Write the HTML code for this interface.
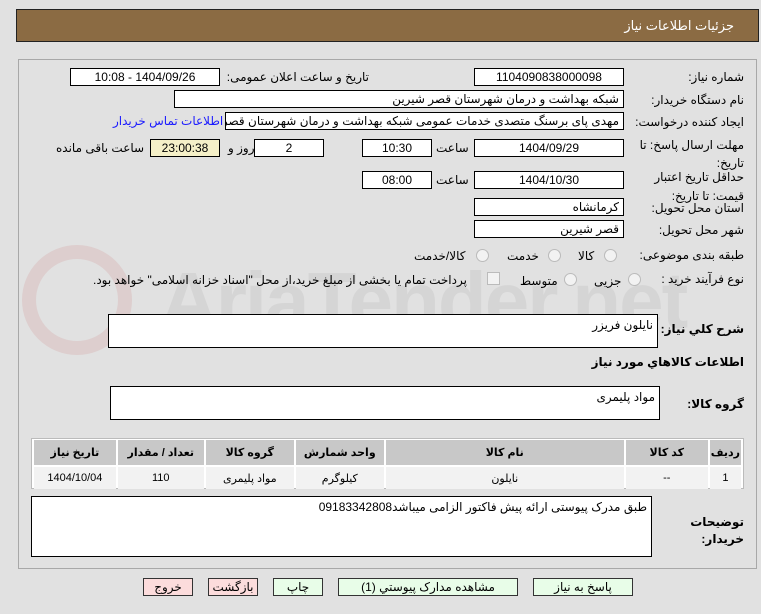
<!DOCTYPE html>
<html><head><meta charset="utf-8"><style>
body{margin:0;width:761px;height:614px;background:#e1e1e1;font-family:"Liberation Sans","DejaVu Sans",sans-serif;font-size:12px;color:#000;position:relative;overflow:hidden;direction:rtl}
.a{position:absolute}
.hdr{left:16px;top:9px;width:743px;height:33px;background:#8b6b43;border:1px solid #222;box-sizing:border-box}
.hdr span{position:absolute;right:24px;top:8px;color:#fff;font-size:13px}
.panel{left:18px;top:59px;width:739px;height:510px;border:1px solid #a8a8a8;box-sizing:border-box}
.box{position:absolute;background:#fff;border:1px solid #000;box-sizing:border-box;height:18px;font-size:12px;line-height:16px;padding:0 4px;white-space:nowrap;overflow:hidden}
.c{text-align:center}
.l{position:absolute;white-space:nowrap;font-size:12px}
.rad{position:absolute;width:11px;height:11px;border-radius:50%;border:1px solid #bbb;background:#f2f2f2}
.btn{position:absolute;top:578px;height:18px;border:1px solid #333;box-sizing:border-box;font-size:12px;text-align:center;line-height:16px;background:#e8fde8}
table{border-collapse:separate;border-spacing:2px;font-size:11px}
th{background:#c8c8c8;height:23px;font-weight:bold}
td{background:#f2f2f2;height:20px;text-align:center}
</style></head><body>
<div class="a hdr"><span>جزئیات اطلاعات نیاز</span></div>
<div class="a panel"></div>
<div class="a" style="left:22px;top:245px;width:110px;height:110px;border-radius:50%;border:14px solid rgba(205,120,120,.18);box-sizing:border-box"></div>
<div class="a" style="left:160px;top:255px;font-size:80px;font-weight:bold;color:rgba(150,150,150,.15);direction:ltr;letter-spacing:-2px">AriaTender.net</div>

<div class="l" style="right:17px;top:70px">شماره نیاز:</div>
<div class="box c" style="left:474px;top:68px;width:150px">1104090838000098</div>
<div class="l" style="right:392px;top:70px">تاریخ و ساعت اعلان عمومی:</div>
<div class="box c" style="left:70px;top:68px;width:150px">1404/09/26 - 10:08</div>

<div class="l" style="right:17px;top:93px">نام دستگاه خریدار:</div>
<div class="box" style="left:174px;top:90px;width:450px">شبکه بهداشت و درمان شهرستان قصر شیرین</div>

<div class="l" style="right:17px;top:115px">ایجاد کننده درخواست:</div>
<div class="box" style="left:225px;top:112px;width:399px">مهدی پای برسنگ متصدی خدمات عمومی شبکه بهداشت و درمان شهرستان قصر</div>
<div class="l" style="left:113px;top:114px;color:#1a1aff">اطلاعات تماس خریدار</div>

<div class="l" style="right:17px;top:136px;line-height:18px">مهلت ارسال پاسخ: تا<br>تاریخ:</div>
<div class="box c" style="left:474px;top:139px;width:150px">1404/09/29</div>
<div class="l" style="left:436px;top:141px">ساعت</div>
<div class="box c" style="left:362px;top:139px;width:70px">10:30</div>
<div class="l" style="left:228px;top:141px">روز و</div>
<div class="box c" style="left:254px;top:139px;width:70px">2</div>
<div class="box c" style="left:150px;top:139px;width:70px;background:#f5f0c8">23:00:38</div>
<div class="l" style="left:56px;top:141px">ساعت باقی مانده</div>

<div class="l" style="right:17px;top:168px;line-height:19px">حداقل تاریخ اعتبار<br>قیمت: تا تاریخ:</div>
<div class="box c" style="left:474px;top:171px;width:150px">1404/10/30</div>
<div class="l" style="left:436px;top:173px">ساعت</div>
<div class="box c" style="left:362px;top:171px;width:70px">08:00</div>

<div class="l" style="right:17px;top:201px">استان محل تحویل:</div>
<div class="box" style="left:474px;top:198px;width:150px">کرمانشاه</div>
<div class="l" style="right:17px;top:223px">شهر محل تحویل:</div>
<div class="box" style="left:474px;top:220px;width:150px">قصر شیرین</div>

<div class="l" style="right:17px;top:248px">طبقه بندی موضوعی:</div>
<div class="rad" style="left:604px;top:249px"></div><div class="l" style="left:578px;top:249px">کالا</div>
<div class="rad" style="left:548px;top:249px"></div><div class="l" style="left:507px;top:249px">خدمت</div>
<div class="rad" style="left:476px;top:249px"></div><div class="l" style="left:414px;top:249px">کالا/خدمت</div>

<div class="l" style="right:17px;top:272px">نوع فرآیند خرید :</div>
<div class="rad" style="left:628px;top:273px"></div><div class="l" style="left:594px;top:274px">جزیی</div>
<div class="rad" style="left:564px;top:273px"></div><div class="l" style="left:520px;top:274px">متوسط</div>
<div class="a" style="left:487px;top:272px;width:11px;height:11px;border:1px solid #bbb;background:#f2f2f2"></div>
<div class="l" style="left:93px;top:273px">پرداخت تمام یا بخشی از مبلغ خرید،از محل "اسناد خزانه اسلامی" خواهد بود.</div>

<div class="l" style="right:17px;top:322px;font-weight:bold">شرح کلي نياز:</div>
<div class="box" style="left:108px;top:314px;width:550px;height:34px;padding-top:2px">نایلون فریزر</div>
<div class="l" style="right:17px;top:355px;font-weight:bold">اطلاعات کالاهاي مورد نياز</div>
<div class="l" style="right:17px;top:397px;font-weight:bold">گروه کالا:</div>
<div class="box" style="left:110px;top:386px;width:550px;height:34px;padding-top:2px">مواد پلیمری</div>

<div class="a" style="left:31px;top:438px;width:713px;height:51px;border:1px solid #bbb;box-sizing:border-box;background:#fff">
<table style="width:100%;margin:-1px 0 0 0">
<tr><th style="width:24px">ردیف</th><th style="width:80px">کد کالا</th><th style="width:236px">نام کالا</th><th style="width:86px">واحد شمارش</th><th style="width:86px">گروه کالا</th><th style="width:84px">تعداد / مقدار</th><th>تاریخ نیاز</th></tr>
<tr><td>1</td><td>--</td><td>نایلون</td><td>کیلوگرم</td><td>مواد پلیمری</td><td>110</td><td>1404/10/04</td></tr>
</table></div>

<div class="l" style="right:17px;top:514px;font-weight:bold;line-height:17px">توضیحات<br>خریدار:</div>
<div class="box" style="left:31px;top:496px;width:621px;height:61px;padding-top:2px">طبق مدرک پیوستی ارائه پیش فاکتور الزامی میباشد09183342808</div>

<div class="btn" style="left:533px;width:100px">پاسخ به نیاز</div>
<div class="btn" style="left:338px;width:180px">مشاهده مدارک پیوستي (1)</div>
<div class="btn" style="left:273px;width:50px">چاپ</div>
<div class="btn" style="left:208px;width:50px;background:#fcdcdc">بازگشت</div>
<div class="btn" style="left:143px;width:50px;background:#fcdcdc">خروج</div>
</body></html>
